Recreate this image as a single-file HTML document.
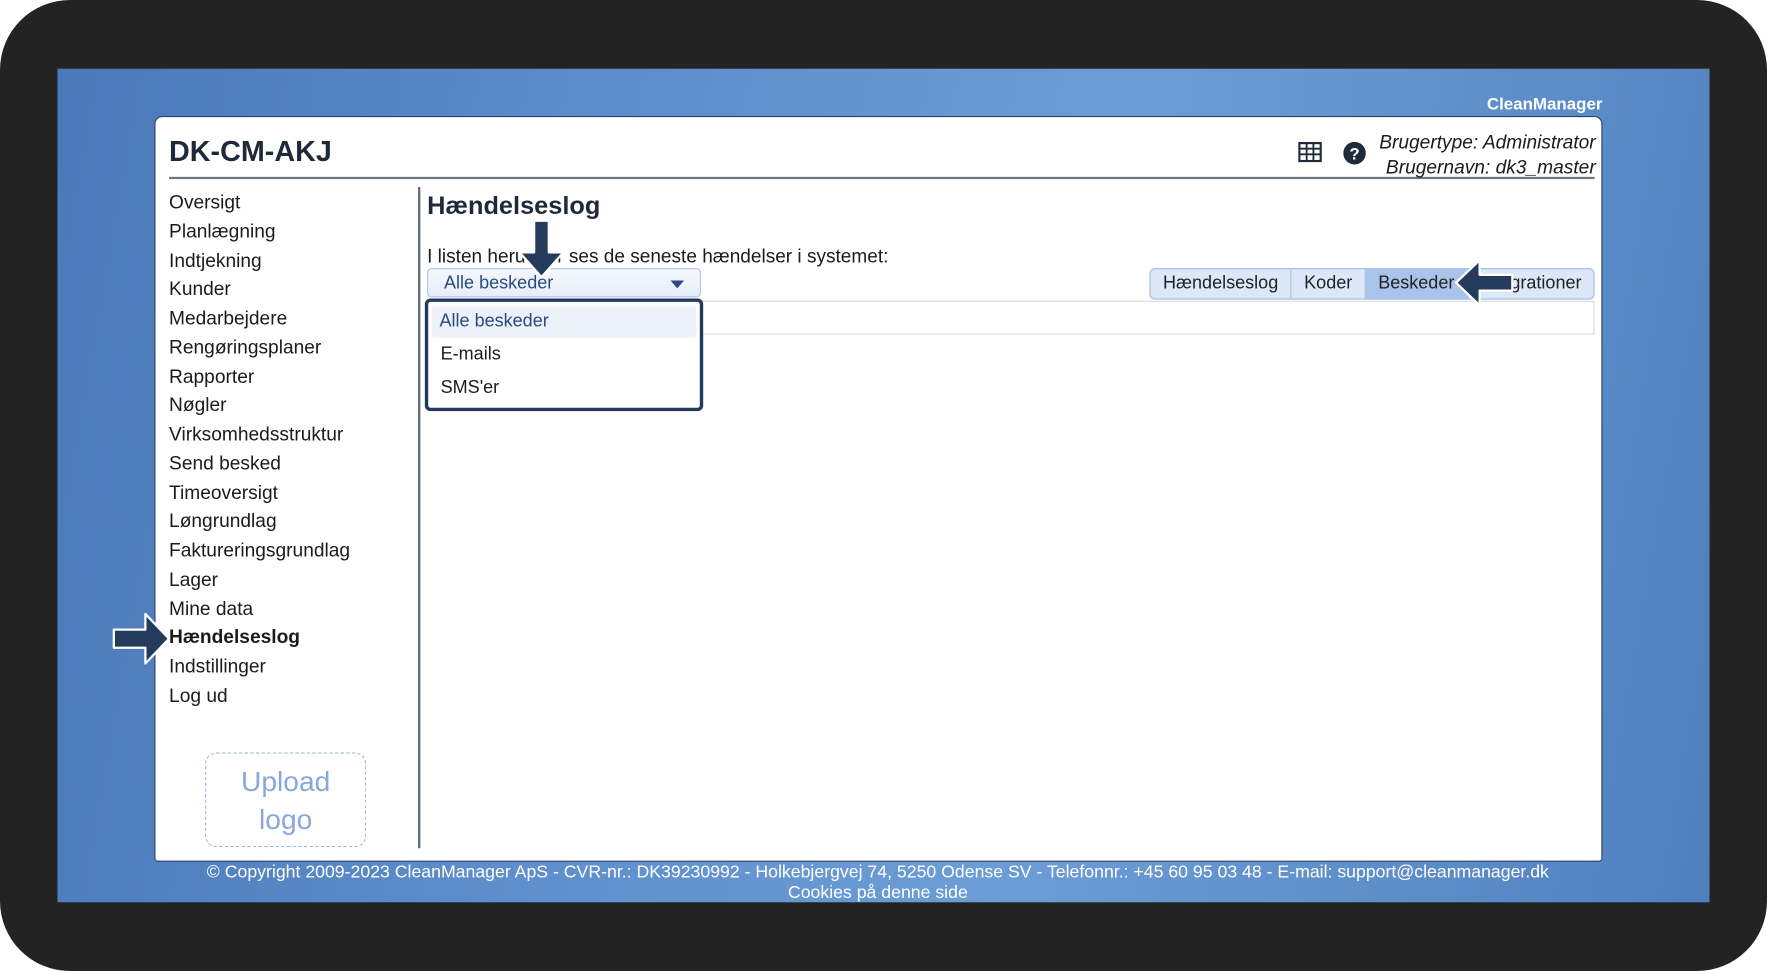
<!DOCTYPE html>
<html><head><meta charset="utf-8"><style>
html,body{margin:0;padding:0;width:1767px;height:971px;overflow:hidden;background:#fff;font-family:"Liberation Sans",Arial,sans-serif}
#s{position:absolute;left:0;top:0;width:1568px;height:862px;transform:scale(1.12691,1.12645);transform-origin:0 0}
.frame{position:absolute;left:0;top:0;width:1568px;height:862px;background:#232323;border-radius:62px}
.blue{position:absolute;left:51px;top:61px;width:1466px;height:740px;background:linear-gradient(100deg,#4a78b8 0%,#5f8fcc 35%,#6c9dd6 60%,#5c8cc8 85%,#4f7fbd 100%)}
.a{position:absolute;white-space:nowrap}
.panel{position:absolute;left:137px;top:103px;width:1283px;height:660px;background:#fff;border:1px solid #2c4468;border-radius:7px 7px 3px 3px}
.nav{position:absolute;left:150px;font-size:17px;color:#1b1b1b}
.tabs{position:absolute;left:1020px;top:238px;height:26px;border:1px solid #9dbbe3;border-radius:5px;background:#dce8f7;display:flex;font-size:16px;color:#222;overflow:hidden}
.tabs div{padding:0 11px;line-height:26px;border-right:1px solid #a9c2e4}
</style></head><body><div id="s">
<div class="frame"></div>
<div class="blue"></div>
<div class="a" style="right:146px;top:84px;font-size:15px;font-weight:bold;color:#fff">CleanManager</div>
<div class="panel"></div>
<div class="a" style="left:150px;top:121px;font-size:25.5px;font-weight:bold;color:#1e2a3a">DK-CM-AKJ</div>
<div class="a" style="left:150px;top:157px;width:1265px;height:2px;background:#6f7780"></div>
<svg class="a" style="left:1152px;top:126px" width="21" height="18" viewBox="0 0 21 18"><rect x="1" y="1" width="19" height="16" fill="none" stroke="#1e2a3a" stroke-width="2"/><path d="M1 6H20M1 11H20M7.5 1V17M13.5 1V17" stroke="#1e2a3a" stroke-width="1.6"/></svg>
<svg class="a" style="left:1192px;top:126px" width="20" height="20" viewBox="0 0 20 20"><circle cx="10" cy="10" r="10" fill="#1e2a3a"/><text x="10" y="15.5" text-anchor="middle" font-family="Liberation Sans" font-weight="bold" font-size="15" fill="#fff">?</text></svg>
<div class="a" style="right:152px;top:116px;font-size:17px;font-style:italic;color:#1b1b1b;text-align:right;line-height:22px">Brugertype: Administrator<br>Brugernavn: dk3_master</div>
<div class="nav" style="top:167px;line-height:25.75px">Oversigt<br>Planlægning<br>Indtjekning<br>Kunder<br>Medarbejdere<br>Rengøringsplaner<br>Rapporter<br>Nøgler<br>Virksomhedsstruktur<br>Send besked<br>Timeoversigt<br>Løngrundlag<br>Faktureringsgrundlag<br>Lager<br>Mine data<br><b>Hændelseslog</b><br>Indstillinger<br>Log ud</div>
<div class="a" style="left:371px;top:166px;width:2px;height:587px;background:#5a6878"></div>
<div class="a" style="left:182px;top:668px;width:143px;height:84px;border:1px dashed #9cb8e0;border-radius:10px;color:#86a8dc;font-size:25px;text-align:center;line-height:34px;padding-top:8px;box-sizing:border-box">Upload<br>logo</div>
<div class="a" style="left:379px;top:170px;font-size:22.5px;font-weight:bold;color:#1e2a3a">Hændelseslog</div>
<div class="a" style="left:379px;top:218px;font-size:16.9px;color:#1b1b1b">I listen herunder ses de seneste hændelser i systemet:</div>
<div class="a" style="left:379px;top:238px;width:243px;height:26px;border:1px solid #aac4e8;border-radius:4px;background:linear-gradient(#f5f8fd,#e6eef9);box-sizing:border-box;font-size:16px;color:#2a4a80;line-height:25px;padding-left:14px">Alle beskeder<span style="position:absolute;right:14px;top:10px;border-left:6px solid transparent;border-right:6px solid transparent;border-top:7px solid #2a4a80"></span></div>
<div class="a" style="left:621px;top:267px;width:794px;height:30px;border:1px solid #dcdcdc;box-sizing:border-box"></div>
<div class="a" style="left:377px;top:265px;width:247px;height:100px;border:3px solid #233a5c;border-radius:5px;background:#fff;box-sizing:border-box;font-size:16px;color:#1b1b1b">
<div style="margin:4px 3px 0;background:#edf2fa;color:#2a4a80;padding-left:7px;height:28px;line-height:28px;border-radius:3px">Alle beskeder</div>
<div style="padding-left:11px;line-height:30px">E-mails</div>
<div style="padding-left:11px;line-height:29px">SMS'er</div></div>
<div class="tabs"><div>Hændelseslog</div><div>Koder</div><div style="background:#a9c4ea">Beskeder</div><div style="border:0;padding-right:11px">Integrationer</div></div>
<svg class="a" style="left:0;top:0" width="1568" height="862"><g fill="#243b5c" stroke="#fff" stroke-width="2" stroke-linejoin="round">
<path d="M474 196H487V224H500L480.5 246L461 224H474Z"/>
<path d="M1292 251L1313 231V244H1342V258H1313V271Z"/>
<path d="M150 567L129 545V559H101V575H129V589Z"/></g></svg>
<div class="a" style="left:0;width:1558px;top:766px;text-align:center;color:#fff;font-size:15.7px;line-height:18px">© Copyright 2009-2023 CleanManager ApS - CVR-nr.: DK39230992 - Holkebjergvej 74, 5250 Odense SV - Telefonnr.: +45 60 95 03 48 - E-mail: support@cleanmanager.dk<br>Cookies på denne side</div>
</div></body></html>
